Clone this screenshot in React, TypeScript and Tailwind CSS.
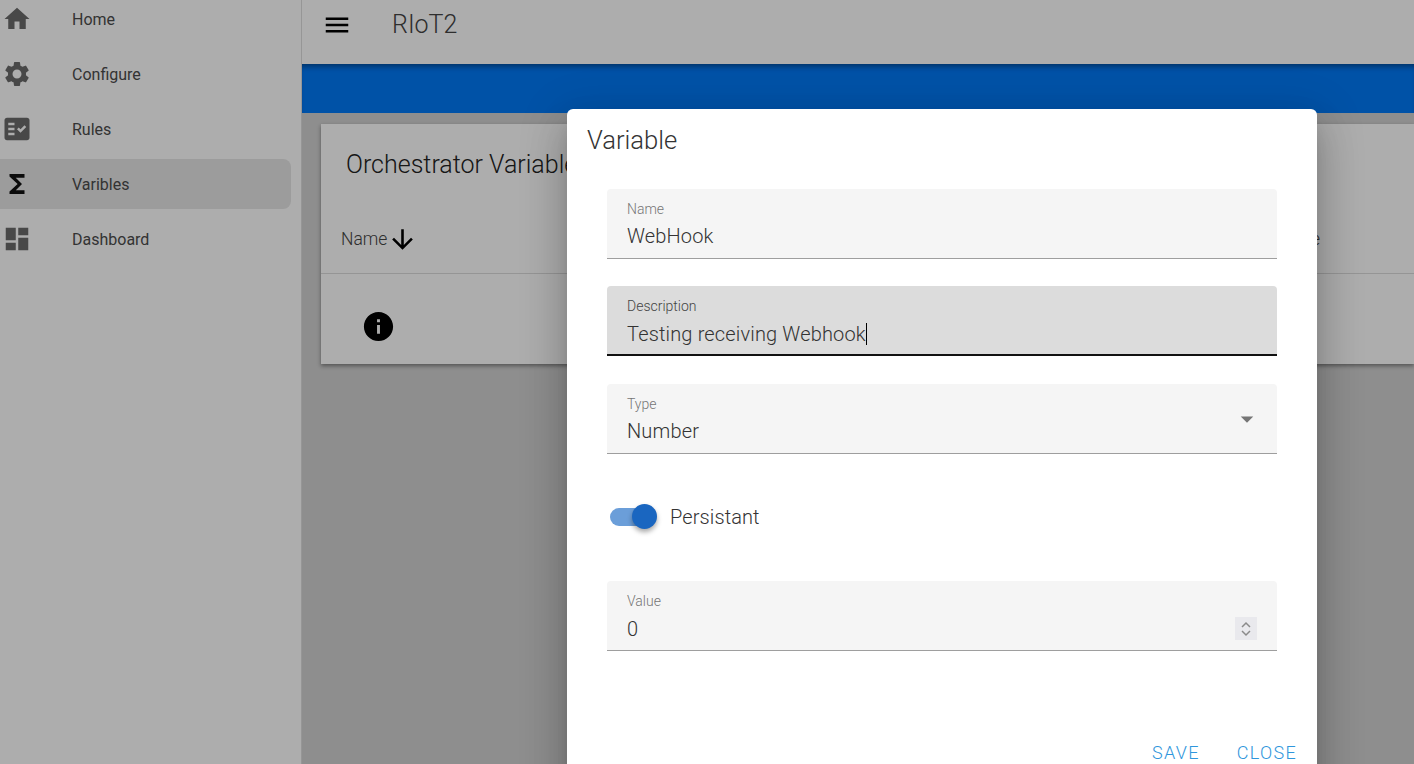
import { MdArrowDownward, MdArrowDropDown, MdDashboard, MdFactCheck, MdFunctions, MdHome, MdInfo, MdMenu, MdSettings } from 'react-icons/md';

const navItems = [
  { label: 'Home', icon: MdHome },
  { label: 'Configure', icon: MdSettings },
  { label: 'Rules', icon: MdFactCheck },
  { label: 'Varibles', icon: MdFunctions, active: true },
  { label: 'Dashboard', icon: MdDashboard },
];

function Sidebar() {
  return (
    <aside className="w-[302px] shrink-0 h-full bg-white border-r border-[#dedede] overflow-hidden">
      <nav className="flex flex-col gap-[5px] -mt-[6px] pr-[10px]">
        {navItems.map(({ label, icon: Icon, active }) => (
          <div
            key={label}
            className={`flex items-center h-[50px] rounded-r-lg ${active ? 'bg-[#e6e6e6] text-[#111]' : 'text-[#6a6a6a]'}`}
          >
            <span className="w-[72px] pl-[2px] flex">
              <Icon size={30} />
            </span>
            <span className="text-base text-[#4c4c4c] pt-[2px]">{label}</span>
          </div>
        ))}
      </nav>
    </aside>
  );
}

function Field({ label, value, focused, caret, nudge, children }: { label: string; value: string; focused?: boolean; caret?: boolean; nudge?: boolean; children?: React.ReactNode }) {
  return (
    <div
      className={`relative h-[70px] rounded-t px-5 pt-[10px] ${
        focused ? 'bg-[#dcdcdc] border-b-2 border-[#111]' : 'bg-[#f5f5f5] border-b border-[#9e9e9e]'
      }`}
    >
      <div className={`text-sm leading-5 font-light ${focused ? 'text-[#444]' : 'text-[#757575]'}`}>{label}</div>
      <div className={`text-xl leading-[30px] text-[#333] font-light tracking-[0.16px] flex items-center ${nudge ? 'pt-[3px]' : 'pt-[2px]'}`}>
        {value}
        {caret && <span className="w-px h-[22px] bg-black" />}
      </div>
      {children}
    </div>
  );
}

function VariableDialog() {
  return (
    <div className="absolute left-[567px] top-[109px] w-[750px] h-[700px] bg-white rounded-t-md px-5 shadow-[0_11px_15px_-7px_rgba(0,0,0,0.2),0_24px_38px_3px_rgba(0,0,0,0.14),0_9px_46px_8px_rgba(0,0,0,0.12)]">
      <h2 className="text-[25.6px] font-light text-[#333] leading-[30px] pt-[16px]">Variable</h2>
      <div className="mt-[34px] mx-5 flex flex-col">
        <Field label="Name" value="WebHook" />
        <div className="mt-[27px]">
          <Field label="Description" value="Testing receiving Webhook" focused caret nudge />
        </div>
        <div className="mt-7">
          <Field label="Type" value="Number">
            <MdArrowDropDown size={30} className="absolute right-[15px] top-5 text-[#757575]" />
          </Field>
        </div>
        <div className="mt-[45px] h-[35px] flex items-center gap-[15px] pl-[3px]">
          <div className="relative w-[45px] h-[18px] rounded-full bg-[#6b9ed9]">
            <div className="absolute right-[-2px] top-[-4px] w-[25px] h-[25px] rounded-full bg-[#1a66c0] shadow-[0_3px_5px_rgba(0,0,0,0.35)]" />
          </div>
          <span className="text-xl font-light tracking-[0.1px] text-[#333]">Persistant</span>
        </div>
        <div className="mt-[47px]">
          <Field label="Value" value="0" nudge>
            <div className="absolute right-5 top-[36px] w-[22px] h-[23px] bg-[#e9e9ed] flex items-center justify-center">
              <svg width="12" height="18" viewBox="0 0 12 18" fill="none" stroke="#8a8a8a" strokeWidth="1.5">
                <path d="M2 7 L6 3 L10 7" />
                <path d="M2 11 L6 15 L10 11" />
              </svg>
            </div>
          </Field>
        </div>
      </div>
      <div className="mt-[88px] flex justify-end gap-[37px] text-lg font-light tracking-[1.3px] text-[#2f96dc]">
        <span>SAVE</span>
        <span>CLOSE</span>
      </div>
    </div>
  );
}

export default function App() {
  return (
    <div className="relative w-[1414px] h-[764px] overflow-hidden flex font-['Roboto',sans-serif]">
      <Sidebar />
      <main className="flex-1 min-w-0 bg-[#d1d1d1]">
        <header className="h-16 bg-white flex items-center pl-[20px] gap-[40px] pb-[15px] text-[#444]">
          <MdMenu size={30} className="text-black" />
          <span className="text-[25px] font-light leading-none">RIoT2</span>
        </header>
        <div className="h-[49px] bg-[#0079f7] shadow-[inset_0_6px_6px_-4px_rgba(0,0,0,0.45)]" />
        <section className="ml-[19px] mt-[11px] h-[240px] bg-white shadow-[0_2px_4px_rgba(0,0,0,0.4)]">
          <h1 className="h-[90px] pl-[25px] pt-[25px] text-[25px] font-light leading-8 text-[#222]">Orchestrator Variables</h1>
          <div className="h-[60px] pl-5 pr-[94px] pb-2 flex items-center justify-between border-b border-[#dcdcdc] text-[#444]">
            <span className="flex items-center font-light text-[17.5px]">
              Name
              <MdArrowDownward size={31} className="text-black" />
            </span>
            <span className="font-light text-[17.5px]">Value</span>
          </div>
          <div className="pl-[40px] pt-[35px]">
            <MdInfo size={35} className="text-black" />
          </div>
        </section>
      </main>
      <div className="absolute inset-0 bg-black/32" />
      <VariableDialog />
    </div>
  );
}
